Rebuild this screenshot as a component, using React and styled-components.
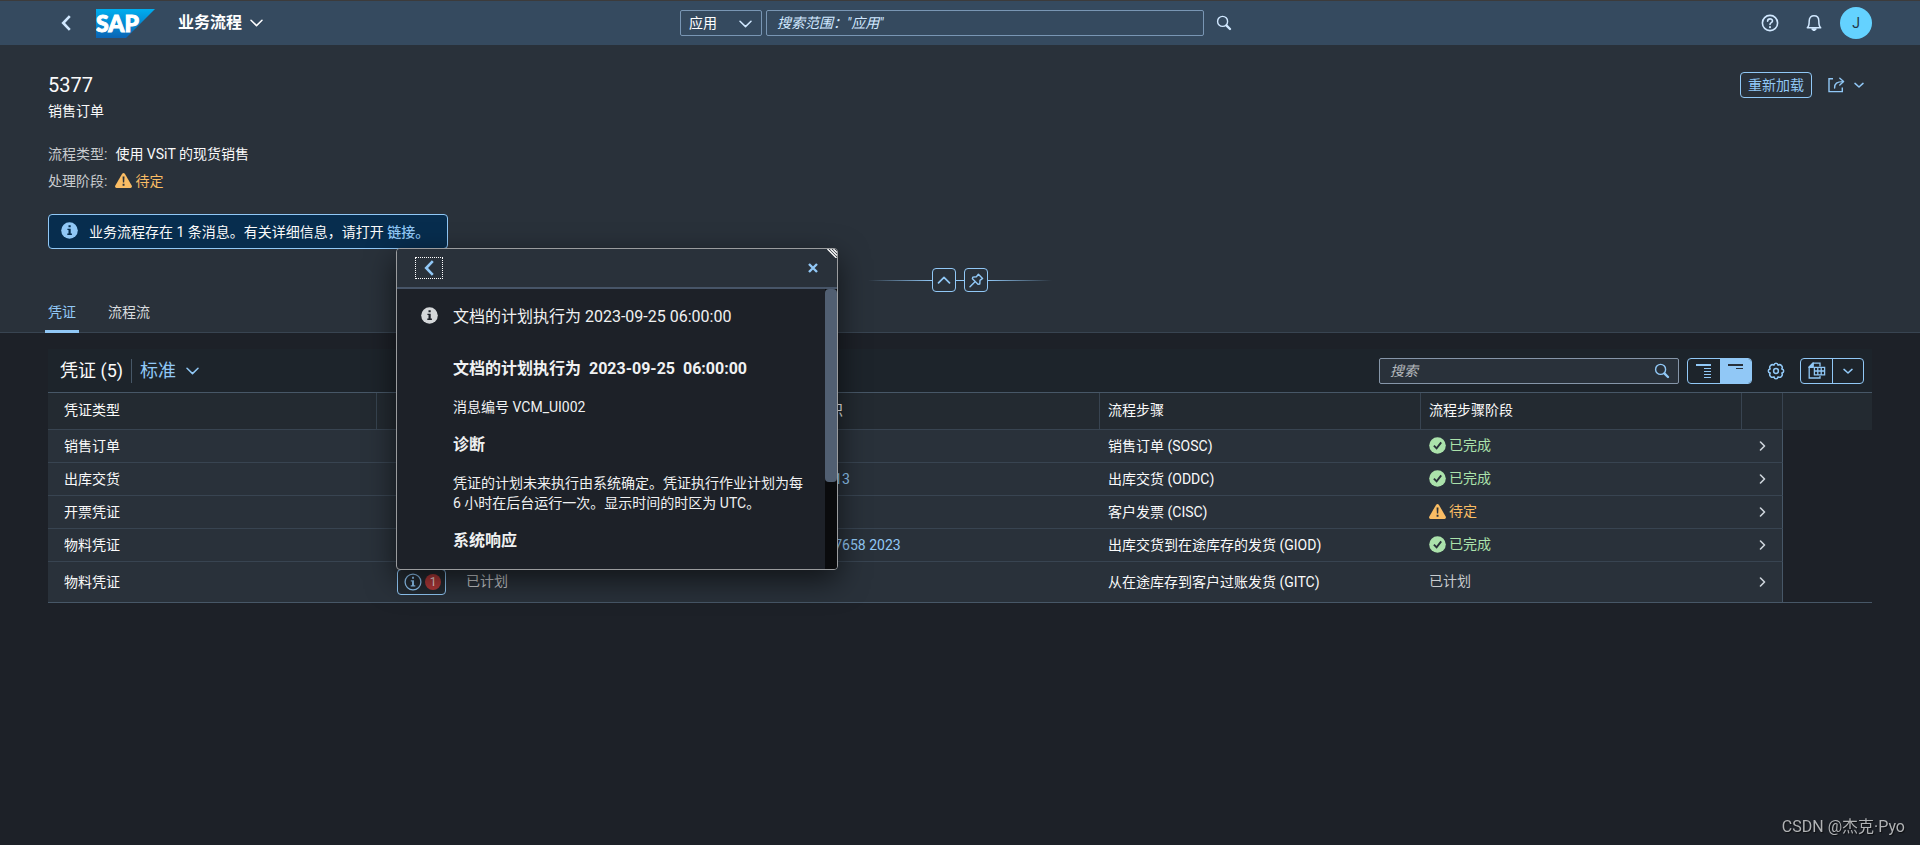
import React from "react";
import styled, { createGlobalStyle, css } from "styled-components";

const c = {
  shell: "#354a5f",
  shellText: "#d1e8ff",
  page: "#1d2128",
  surface: "#29313a",
  headerCell: "#232a31",
  toolbar: "#1d242b",
  line: "#384451",
  strongLine: "#475767",
  accent: "#91c8f6",
  text: "#fafafa",
  muted: "#c8cbce",
  good: "#abe2ab",
  warn: "#fabd64",
};

const GlobalStyle = createGlobalStyle`
  *, *::before, *::after { box-sizing: border-box; }
  body {
    margin: 0;
    background: ${c.page};
    color: ${c.text};
    font: 14px/20px Roboto, "Noto Sans CJK SC", sans-serif;
  }
  button, input, select { font: inherit; color: inherit; margin: 0; }
  button { cursor: pointer; }
  svg { display: block; flex: none; }
`;

const Page = styled.div`
  min-height: 100vh;
`;

const bare = css`
  display: flex;
  align-items: center;
  justify-content: center;
  padding: 0;
  background: none;
  border: 0;
`;

/* ---------- shell bar ---------- */

const ShellBar = styled.header`
  display: grid;
  grid-template-columns: 1fr auto 1fr;
  align-items: center;
  height: 45px;
  padding: 0 48px;
  background: ${c.shell};
  border-top: 1px solid #3c3b3b;
  color: ${c.shellText};
`;

const ShellGroup = styled.div`
  display: flex;
  align-items: center;
  justify-content: ${(p) => (p.$end ? "flex-end" : "flex-start")};
  gap: ${(p) => p.$gap}px;
`;

const ShellButton = styled.button`
  ${bare}
  width: ${(p) => (p.$narrow ? 32 : 36)}px;
  height: 36px;
`;

const AppTitle = styled.button`
  ${bare}
  gap: 8px;
  margin-left: 11px;
  color: #fff;
  font-size: 16px;
  font-weight: 700;
`;

const SelectWrap = styled.div`
  position: relative;
  width: 82px;

  svg {
    position: absolute;
    right: 10px;
    top: 10px;
    pointer-events: none;
  }
`;

const ScopeSelect = styled.select`
  appearance: none;
  width: 100%;
  height: 26px;
  padding: 0 8px;
  line-height: 24px;
  background: transparent;
  border: 1px solid #7996b4;
  border-radius: 2px;
  color: #fff;
  display: block;
`;

const ShellSearch = styled.input`
  width: 438px;
  height: 26px;
  padding: 0 10px;
  background: transparent;
  border: 1px solid #7996b4;
  border-radius: 2px;

  &::placeholder {
    color: ${c.shellText};
    font-style: italic;
    opacity: 1;
  }
`;

const Avatar = styled.button`
  ${bare}
  width: 32px;
  height: 32px;
  border-radius: 50%;
  background: #64d2ff;
  color: #223548;
`;

/* ---------- object header ---------- */

const ObjectHeader = styled.section`
  padding: 24px 48px 0;
  background: ${c.surface};
`;

const TitleRow = styled.div`
  display: flex;
  justify-content: space-between;
  align-items: center;
  height: 32px;
`;

const Title = styled.h1`
  margin: 0;
  font-size: 20px;
  line-height: 32px;
  font-weight: 400;
`;

const Actions = styled.div`
  display: flex;
  align-items: center;
  gap: 8px;
  color: ${c.accent};
`;

const OutlineButton = styled.button`
  ${bare}
  height: 26px;
  padding: 0 7px;
  border: 1px solid ${c.accent};
  border-radius: 4px;
`;

const ShareButton = styled.button`
  ${bare}
  height: 26px;
  gap: 9px;
  padding: 0 8px 0 7px;
`;

const Subtitle = styled.p`
  margin: 0 0 20px;
`;

const Attributes = styled.dl`
  margin: 0 0 19px;
`;

const Attribute = styled.div`
  display: flex;
  gap: 8px;
  line-height: 27px;

  dt { color: ${c.muted}; }
  dd { margin: 0; display: flex; align-items: center; }
`;

const StatusText = styled.span`
  display: inline-flex;
  align-items: center;
  gap: 3px;
  padding-bottom: 2px;
  line-height: 20px;
  vertical-align: top;
  color: ${(p) => c[p.$tone]};
`;

const MessageStrip = styled.div`
  display: flex;
  align-items: center;
  gap: 11px;
  width: 400px;
  height: 35px;
  padding: 0 12px;
  background: #072d4e;
  border: 1px solid ${c.accent};
  border-radius: 4px;
`;

const Link = styled.a`
  color: ${c.accent};
  text-decoration: none;
`;

const StripLink = styled(Link)`
  font-weight: 500;
`;

const CollapseBar = styled.div`
  display: flex;
  align-items: center;
  justify-content: center;
  margin-top: 19px;
  color: ${c.accent};
`;

const CollapseLine = styled.span`
  width: ${(p) => (p.$fade ? 64 : 8)}px;
  height: 1px;
  background: ${(p) =>
    p.$fade ? `linear-gradient(to ${p.$fade}, ${c.accent}, transparent)` : c.accent};
`;

const SquareButton = styled.button`
  ${bare}
  width: 24px;
  height: 24px;
  border: 1px solid ${c.accent};
  border-radius: 4px;
`;

const Tabs = styled.nav`
  display: flex;
  gap: 26px;
  height: 41px;
  margin: 0 -48px;
  padding: 0 45px;
  box-shadow: inset 0 -1px ${c.line};
`;

const Tab = styled.button`
  ${bare}
  padding: 1px 3px 0;
  border-bottom: 3px solid ${(p) => (p.$active ? c.accent : "transparent")};
  color: ${(p) => (p.$active ? c.accent : "#d9dcdf")};
`;

/* ---------- table ---------- */

const TablePanel = styled.main`
  margin: 16px 48px 0;
`;

const Toolbar = styled.div`
  display: flex;
  align-items: center;
  justify-content: space-between;
  height: 44px;
  padding: 0 8px 0 12px;
  background: ${c.toolbar};
  border-bottom: 1px solid ${c.strongLine};
`;

const ToolGroup = styled.div`
  display: flex;
  align-items: center;
  gap: 8px;
  color: ${c.accent};
`;

const TableTitle = styled.h2`
  margin: 0;
  padding-right: 8px;
  border-right: 1px solid ${c.strongLine};
  color: ${c.text};
  font-size: 18px;
  line-height: 24px;
  font-weight: 400;
`;

const VariantButton = styled.button`
  ${bare}
  gap: 10px;
  font-size: 18px;
`;

const SearchBox = styled.div`
  display: flex;
  align-items: center;
  width: 300px;
  height: 26px;
  padding-right: 8px;
  background: ${c.surface};
  border: 1px solid #8696a9;
  border-radius: 2px;

  input {
    flex: 1;
    min-width: 0;
    padding: 0 10px;
    background: none;
    border: 0;
  }
  input::placeholder {
    color: #b4b8bc;
    font-style: italic;
    opacity: 1;
  }
`;

const ButtonGroup = styled.div`
  display: flex;
  height: 26px;
  border: 1px solid ${c.accent};
  border-radius: 4px;
  overflow: hidden;
`;

const GroupButton = styled.button`
  ${bare}
  width: ${(p) => (p.$wide ? 32 : 31)}px;
  border-left: ${(p) => (p.$divided ? `1px solid ${c.accent}` : 0)};
  background: ${(p) => (p.$pressed ? c.accent : "transparent")};
  color: ${(p) => (p.$pressed ? c.surface : c.accent)};
`;

const IconButton = styled.button`
  ${bare}
  width: 32px;
  height: 26px;
`;

const Table = styled.table`
  width: 100%;
  table-layout: fixed;
  border-spacing: 0;
  border-bottom: 1px solid ${c.strongLine};
`;

const Head = styled.th`
  height: 37px;
  padding: 0 8px 2px ${(p) => (p.$first ? 16 : 8)}px;
  background: ${c.headerCell};
  border-right: 1px solid ${c.line};
  border-bottom: 1px solid ${c.line};
  font-weight: 400;
  line-height: 20px;
  text-align: left;
`;

const FillerHead = styled.td`
  background: ${c.headerCell};
`;

const Cell = styled.td`
  height: 33px;
  padding: 0 8px 0 ${(p) => (p.$first ? 16 : 8)}px;
  background: ${c.surface};
  border-bottom: 1px solid ${c.line};
  line-height: 20px;
  white-space: nowrap;

  tr:last-child > & { border-bottom: 0; }
`;

const MessageCell = styled(Cell)`
  padding: 7px 8px 7px 20px;
`;

const NavCell = styled(Cell)`
  padding: 0;
  border-right: 1px solid ${c.strongLine};
  color: #cfd6dd;
`;

const RowNav = styled.button`
  ${bare}
  width: 100%;
  height: 20px;
`;

const MessageAnchor = styled.div`
  position: relative;
  width: 49px;
`;

const MessageButton = styled.button`
  ${bare}
  justify-content: flex-start;
  gap: 3px;
  width: 49px;
  height: 26px;
  padding-left: 6px;
  background: ${c.headerCell};
  border: 1px solid ${c.accent};
  border-radius: 4px;
  color: ${c.accent};
`;

const Badge = styled.span`
  width: 16px;
  height: 16px;
  border-radius: 50%;
  background: #b33a3a;
  color: #f3dede;
  font-size: 12px;
  line-height: 16px;
`;

/* ---------- popover ---------- */

const Popover = styled.section`
  position: absolute;
  left: -1px;
  bottom: calc(100% - 1px);
  z-index: 2;
  width: 442px;
  height: 322px;
  display: flex;
  flex-direction: column;
  background: ${c.page};
  border: 1px solid #9a9c9e;
  border-radius: 4px;
  box-shadow: 0 10px 30px rgba(0, 0, 0, 0.6);
  overflow: hidden;
  white-space: normal;
`;

const PopoverBar = styled.header`
  display: flex;
  align-items: center;
  justify-content: space-between;
  height: 40px;
  flex: none;
  padding: 0 18px;
  background: ${c.surface};
  border-bottom: 2px solid #475568;
  color: ${c.accent};
`;

const BackButton = styled.button`
  ${bare}
  width: 28px;
  height: 22px;
  border: 1px dotted #fff;
`;

const CloseButton = styled.button`
  ${bare}
  width: 12px;
  height: 22px;
`;

const ResizeGrip = styled.svg`
  position: absolute;
  top: 0;
  right: 0;
`;

const PopoverBody = styled.div`
  display: flex;
  flex: 1;
  min-height: 0;
`;

const PopoverContent = styled.div`
  flex: 1;
  display: grid;
  grid-template-columns: 17px 1fr;
  column-gap: 15px;
  padding: 18px 16px 0 24px;
  color: #f0f1f2;
  overflow: hidden;
`;

const PopoverText = styled.div`
  display: flex;
  flex-direction: column;
  gap: 18px;

  p, h3, h4 { margin: 0; }
  h3, h4 {
    font-size: 16px;
    line-height: 20px;
    font-weight: 700;
    white-space: pre-wrap;
  }
  h3 { margin-top: 14px; }
`;

const Lead = styled.p`
  font-size: 16px;
`;

const IconSlot = styled.span`
  color: #d5d8da;
`;

const ScrollTrack = styled.div`
  width: 12px;
  background: #0a0b0d;
`;

const ScrollThumb = styled.div`
  height: 69%;
  background: #515f72;
  border-radius: 4px;
`;

const Watermark = styled.footer`
  position: fixed;
  right: 15px;
  bottom: 8px;
  color: #b0b2b4;
  font-size: 16px;
  text-shadow: 1px 1px 1px rgba(0, 0, 0, 0.6);
`;

/* ---------- icons ---------- */

const Stroke = ({ w, h, d, sw = 2, children }) => (
  <svg width={w} height={h} viewBox={`0 0 ${w} ${h}`} fill="none" stroke="currentColor"
    strokeWidth={sw} strokeLinecap="round" strokeLinejoin="round" aria-hidden="true">
    {d && <path d={d} />}
    {children}
  </svg>
);

const ChevronDown = ({ size = 13, sw = 1.5 }) => (
  <Stroke w={size} h={8} sw={sw} d={`M1 1.2 L${size / 2} 6.6 L${size - 1} 1.2`} />
);
const SmallChevron = () => <Stroke w={10} h={8} sw={1.5} d="M1 2.4 L5 6 L9 2.4" />;
const Back = () => (
  <svg width="10" height="16" viewBox="0 0 10 16" fill="none" stroke="currentColor" strokeWidth="2.6" aria-hidden="true">
    <path d="M8.8 1.2 L2.2 8 L8.8 14.8" />
  </svg>
);
const SearchIcon = () => (
  <Stroke w={16} h={16} sw={1.4}>
    <circle cx="6.6" cy="6.4" r="5" />
    <path d="M10.6 10.6 L14 14" strokeWidth="2.4" />
  </Stroke>
);
const HelpIcon = () => (
  <Stroke w={18} h={18} sw={1.6}>
    <circle cx="9" cy="9" r="7.6" />
    <path d="M6.6 7.2 C6.6 4 11.5 4.2 11.5 6.9 C11.5 8.7 9 8.6 9 10.4" />
    <path d="M9 13.1 V13.2" strokeWidth="2" />
  </Stroke>
);
const BellIcon = () => (
  <Stroke w={16} h={18} sw={1.5}>
    <path d="M1.3 13.8 C3.2 12.2 3.2 10.6 3.2 7 C3.2 3.4 5.4 1.8 8 1.8 C10.6 1.8 12.8 3.4 12.8 7 C12.8 10.6 12.8 12.2 14.7 13.8 Z" />
    <path d="M6 15 H10 L8.6 16.2 H7.4 Z" fill="currentColor" />
  </Stroke>
);
const ShareIcon = () => (
  <Stroke w={18} h={16} sw={1.4}>
    <path d="M6 1.7 H2 V14.6 H15.3 V10.6" strokeLinecap="butt" strokeLinejoin="miter" />
    <path d="M7.6 11 C7.4 6.6 10 4.6 16 4.6" />
    <path d="M12.8 1.2 L16.6 4.6 L12.8 8" />
  </Stroke>
);
const PinIcon = () => (
  <Stroke w={15} h={15} sw={1.4}>
    <path d="M9.4 1.2 L13.6 5.4 L11 7.4 L10.8 11 L9 11.2 L3.4 5.7 L3.8 4.1 L7.4 3.8 Z" />
    <path d="M5.8 8.9 L1 13.8" />
  </Stroke>
);
const InfoFilled = ({ ink }) => (
  <svg width="17" height="17" viewBox="0 0 17 17" aria-hidden="true">
    <circle cx="8.5" cy="8.5" r="8.3" fill="currentColor" />
    <path d="M7.5 3.2 h2.2 v2 h-2.2 z M6.4 6.8 h3.3 v4.8 h1.2 v1.3 h-4.6 v-1.3 h1.2 v-3.5 h-1.1 z" fill={ink} />
  </svg>
);
const InfoOutline = () => (
  <svg width="18" height="18" viewBox="0 0 18 18" aria-hidden="true">
    <circle cx="9" cy="9" r="7.9" fill="none" stroke="currentColor" strokeWidth="1.3" />
    <path d="M8 3.7 h2 v2 h-2 z M6.8 7.2 h3.2 v5 h1.3 v1.3 h-4.6 v-1.3 h1.3 v-3.7 h-1.2 z" fill="currentColor" />
  </svg>
);
const DoneIcon = () => (
  <svg width="17" height="17" viewBox="0 0 17 17" aria-hidden="true">
    <circle cx="8.5" cy="8.5" r="8.3" fill="currentColor" />
    <path d="M4.9 8.6 L7.6 11.4 L12.2 5.4" fill="none" stroke={c.surface} strokeWidth="1.9" />
  </svg>
);
const WarnIcon = () => (
  <svg width="17" height="15" viewBox="0 0 17 15" aria-hidden="true">
    <path d="M7 0.9 Q8.5 -0.7 10 0.9 L16.8 12.8 Q17.2 14.7 15.6 15 H1.4 Q-0.2 14.7 0.2 12.8 Z" fill="currentColor" />
    <path d="M7.6 3.6 h1.9 l-0.3 5.8 h-1.3 z M7.6 10.8 h1.9 v1.9 h-1.9 z" fill={c.surface} />
  </svg>
);
const TreeIcon = () => (
  <svg width="16" height="16" viewBox="0 0 16 16" fill="currentColor" aria-hidden="true">
    <path d="M0 1 h15 v2 h-15 z M8 5 h7 v1 h-7 z M8 8 h7 v1 h-7 z M8 11 h7 v1 h-7 z M8 14 h7 v1 h-7 z" />
  </svg>
);
const CollapsedTreeIcon = () => (
  <svg width="16" height="16" viewBox="0 0 16 16" fill="currentColor" aria-hidden="true">
    <path d="M0 1 h15 v2 h-15 z M8 5 h7 v1 h-7 z" />
  </svg>
);
const GearIcon = () => (
  <Stroke w={18} h={18} sw={1.5}>
    <circle cx="9" cy="9" r="2.4" />
    <path d="M7 3.2 Q7.2 1.3 9 1.3 Q10.8 1.3 11 3.2 Q13 1.9 14.4 3.6 Q16 5 14.8 7 Q16.7 7.2 16.7 9 Q16.7 10.8 14.8 11 Q16 13 14.4 14.4 Q13 16 11 14.8 Q10.8 16.7 9 16.7 Q7.2 16.7 7 14.8 Q5 16 3.6 14.4 Q2 13 3.2 11 Q1.3 10.8 1.3 9 Q1.3 7.2 3.2 7 Q2 5 3.6 3.6 Q5 1.9 7 3.2 Z" />
  </Stroke>
);
const ExportIcon = () => (
  <Stroke w={18} h={18} sw={1.3}>
    <path d="M4.6 5 H1.2 V16 H12 V14.4 M1.2 5 L5 1.2 H12 V4" strokeLinejoin="miter" />
    <path d="M1 5.4 L5.2 1 V5.4 Z" fill="currentColor" />
    <path d="M6.4 5.4 H16.6 V12.8 H6.4 Z M6.4 9 H16.6 M9.8 5.4 V12.8 M13.2 5.4 V12.8" strokeLinejoin="miter" />
  </Stroke>
);

const SapLogo = () => (
  <svg width="59" height="29" viewBox="0 0 59 29" role="img" aria-label="SAP">
    <defs>
      <linearGradient id="sapBlue" x1="0" y1="0" x2="0" y2="1">
        <stop offset="0" stopColor="#00aeef" />
        <stop offset="1" stopColor="#0a64b4" />
      </linearGradient>
    </defs>
    <path d="M0 0 H59 L30 29 H0 Z" fill="url(#sapBlue)" />
    <text x="0" y="23" fill="#fff" stroke="#fff" strokeWidth="1" fontFamily="Lato, sans-serif" fontSize="23" fontWeight="900">SAP</text>
  </svg>
);

/* ---------- data ---------- */

const rows = [
  { type: "销售订单", step: "销售订单 (SOSC)", stage: "done" },
  { type: "出库交货", doc: "80000013", step: "出库交货 (ODDC)", stage: "done" },
  { type: "开票凭证", step: "客户发票 (CISC)", stage: "pending" },
  { type: "物料凭证", doc: "4900007658 2023", step: "出库交货到在途库存的发货 (GIOD)", stage: "done" },
  { type: "物料凭证", step: "从在途库存到客户过账发货 (GITC)", stage: "planned", message: true },
];

const stages = {
  done: { label: "已完成", tone: "good", icon: <DoneIcon /> },
  pending: { label: "待定", tone: "warn", icon: <WarnIcon /> },
  planned: { label: "已计划", tone: "muted" },
};

const Stage = ({ name }) => (
  <StatusText $tone={stages[name].tone}>
    {stages[name].icon}
    {stages[name].label}
  </StatusText>
);

const MessagePopover = () => (
  <Popover role="dialog" aria-label="消息">
    <PopoverBar>
      <BackButton aria-label="返回"><Back /></BackButton>
      <CloseButton aria-label="关闭">
        <svg width="10" height="10" viewBox="0 0 10 10" stroke="currentColor" strokeWidth="2.4" aria-hidden="true">
          <path d="M1 1 L9 9 M9 1 L1 9" />
        </svg>
      </CloseButton>
    </PopoverBar>
    <ResizeGrip width="10" height="9" viewBox="0 0 10 9" fill="none" stroke="#fff" strokeWidth="1.4" aria-hidden="true">
      <path d="M0.5 0 L9.5 9 M3.5 0 L10 6.5 M6.5 0 L10 3.5" />
    </ResizeGrip>
    <PopoverBody>
      <PopoverContent>
        <IconSlot><InfoFilled ink={c.page} /></IconSlot>
        <PopoverText>
          <Lead>文档的计划执行为 2023-09-25 06:00:00</Lead>
          <h3>{"文档的计划执行为  2023-09-25  06:00:00"}</h3>
          <p>消息编号 VCM_UI002</p>
          <h4>诊断</h4>
          <p>凭证的计划未来执行由系统确定。凭证执行作业计划为每 6 小时在后台运行一次。显示时间的时区为 UTC。</p>
          <h4>系统响应</h4>
        </PopoverText>
      </PopoverContent>
      <ScrollTrack><ScrollThumb /></ScrollTrack>
    </PopoverBody>
  </Popover>
);

export default function App() {
  return (
    <Page>
      <GlobalStyle />
      <ShellBar>
        <ShellGroup $gap={12}>
          <ShellButton aria-label="返回"><Back /></ShellButton>
          <SapLogo />
          <AppTitle>业务流程<ChevronDown /></AppTitle>
        </ShellGroup>
        <ShellGroup $gap={4}>
          <SelectWrap>
            <ScopeSelect aria-label="搜索类别"><option>应用</option></ScopeSelect>
            <ChevronDown />
          </SelectWrap>
          <ShellSearch aria-label="搜索范围" placeholder={'搜索范围："应用"'} />
          <ShellButton $narrow aria-label="搜索"><SearchIcon /></ShellButton>
        </ShellGroup>
        <ShellGroup $gap={8} $end>
          <ShellButton aria-label="帮助"><HelpIcon /></ShellButton>
          <ShellButton aria-label="通知"><BellIcon /></ShellButton>
          <Avatar>J</Avatar>
        </ShellGroup>
      </ShellBar>

      <ObjectHeader>
        <TitleRow>
          <Title>5377</Title>
          <Actions>
            <OutlineButton>重新加载</OutlineButton>
            <ShareButton aria-label="共享"><ShareIcon /><SmallChevron /></ShareButton>
          </Actions>
        </TitleRow>
        <Subtitle>销售订单</Subtitle>
        <Attributes>
          <Attribute><dt>流程类型:</dt><dd>使用 VSiT 的现货销售</dd></Attribute>
          <Attribute><dt>处理阶段:</dt><dd><Stage name="pending" /></dd></Attribute>
        </Attributes>
        <MessageStrip>
          <StatusText $tone="accent"><InfoFilled ink="#072d4e" /></StatusText>
          <span>业务流程存在 1 条消息。有关详细信息，请打开 <StripLink href="#messages">链接。</StripLink></span>
        </MessageStrip>
        <CollapseBar>
          <CollapseLine $fade="left" />
          <SquareButton aria-label="折叠标题"><Stroke w={14} h={8} sw={1.7} d="M1.5 6.8 L7 1.4 L12.5 6.8" /></SquareButton>
          <CollapseLine />
          <SquareButton aria-label="固定标题"><PinIcon /></SquareButton>
          <CollapseLine $fade="right" />
        </CollapseBar>
        <Tabs>
          <Tab $active>凭证</Tab>
          <Tab>流程流</Tab>
        </Tabs>
      </ObjectHeader>

      <TablePanel>
        <Toolbar>
          <ToolGroup>
            <TableTitle>凭证 (5)</TableTitle>
            <VariantButton>标准<ChevronDown /></VariantButton>
          </ToolGroup>
          <ToolGroup>
            <SearchBox>
              <input aria-label="搜索凭证" placeholder="搜索" />
              <SearchIcon />
            </SearchBox>
            <ButtonGroup>
              <GroupButton $wide aria-label="展开"><TreeIcon /></GroupButton>
              <GroupButton $pressed aria-label="折叠" aria-pressed="true"><CollapsedTreeIcon /></GroupButton>
            </ButtonGroup>
            <IconButton aria-label="设置"><GearIcon /></IconButton>
            <ButtonGroup>
              <GroupButton aria-label="导出"><ExportIcon /></GroupButton>
              <GroupButton $divided aria-label="导出选项"><SmallChevron /></GroupButton>
            </ButtonGroup>
          </ToolGroup>
        </Toolbar>
        <Table>
          <colgroup>
            <col width="329" />
            <col width="81" />
            <col />
            <col />
            <col />
            <col />
            <col width="41" />
            <col width="89" />
          </colgroup>
          <thead>
            <tr>
              <Head scope="col" $first>凭证类型</Head>
              <Head scope="col" aria-label="消息" />
              <Head scope="col" aria-label="状态" />
              <Head scope="col">凭证标识</Head>
              <Head scope="col">流程步骤</Head>
              <Head scope="col">流程步骤阶段</Head>
              <Head scope="col" aria-label="导航" />
              <FillerHead />
            </tr>
          </thead>
          <tbody>
            {rows.map((r) => (
              <tr key={r.step}>
                <Cell $first>{r.type}</Cell>
                {r.message ? (
                  <MessageCell>
                    <MessageAnchor>
                      <MessageButton aria-label="1 条消息"><InfoOutline /><Badge>1</Badge></MessageButton>
                      <MessagePopover />
                    </MessageAnchor>
                  </MessageCell>
                ) : (
                  <Cell />
                )}
                <Cell>{r.message && <Stage name="planned" />}</Cell>
                <Cell>{r.doc && <Link href={`#${r.doc}`}>{r.doc}</Link>}</Cell>
                <Cell>{r.step}</Cell>
                <Cell><Stage name={r.stage} /></Cell>
                <NavCell>
                  <RowNav aria-label="打开"><Stroke w={7} h={10} sw={1.6} d="M1.5 1 L5.5 5 L1.5 9" /></RowNav>
                </NavCell>
              </tr>
            ))}
          </tbody>
        </Table>
      </TablePanel>
      <Watermark>CSDN @杰克·Pyo</Watermark>
    </Page>
  );
}
